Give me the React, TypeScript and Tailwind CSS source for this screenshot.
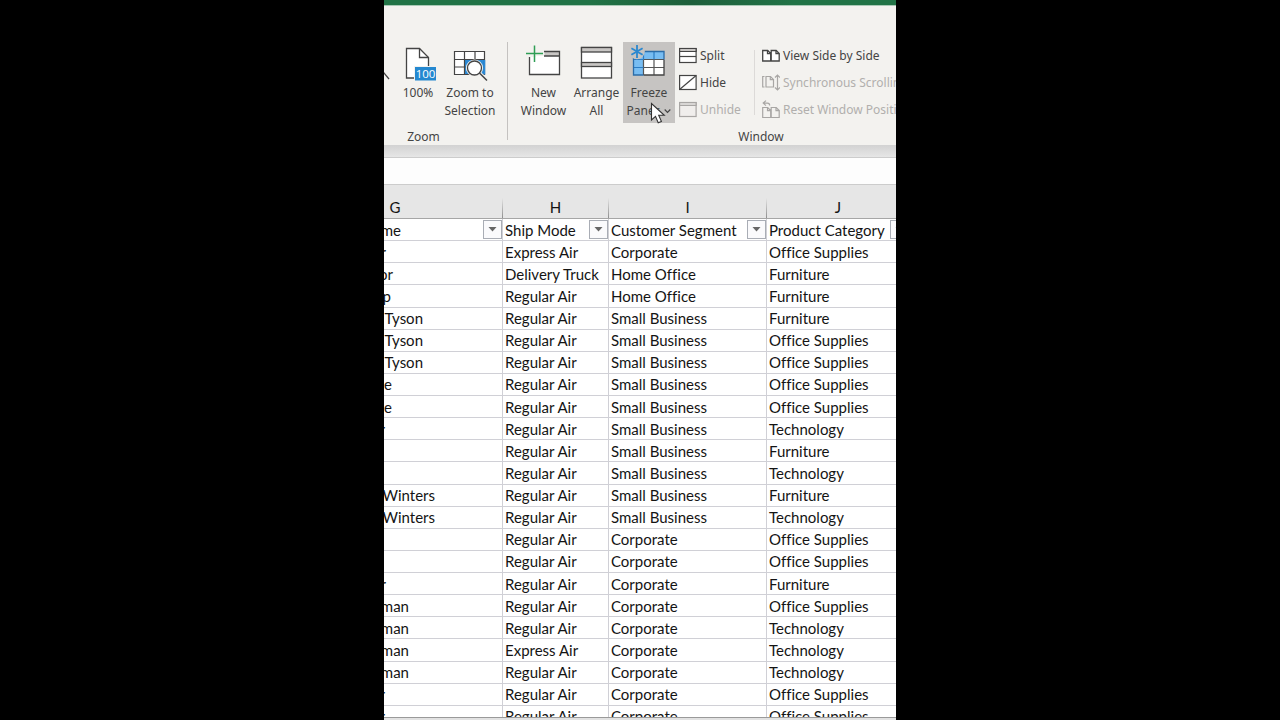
import type { ReactNode } from "react";

const ink = "#444444";

function ZoomIcon() {
  return (
    <svg className="h-[42px] w-[52px] shrink-0" viewBox="0 0 52 42" fill="none" stroke={ink} strokeWidth="1.3">
      <circle cx="32" cy="17" r="10" fill="#fff" />
      <path d="M39 25l10 12" />
    </svg>
  );
}

function HundredIcon() {
  return (
    <svg className="h-[42px] w-[52px] shrink-0" viewBox="0 0 52 42" fill="none" stroke={ink} strokeWidth="1.3">
      <path d="M14.5 6.5h13l9 9v20.5h-22z" fill="#fff" />
      <path d="M27.5 6.5v9h9" />
      <rect x="22" y="24" width="23" height="15.5" fill="#f3f2ef" stroke="none" />
      <rect x="23" y="25" width="21" height="13.5" fill="#2488d0" stroke="none" />
      <text x="33.5" y="36" textAnchor="middle" fontSize="11.5" fill="#fff" stroke="none" fontFamily="Open Sans, sans-serif">
        100
      </text>
    </svg>
  );
}

function SelectionIcon() {
  return (
    <svg className="h-[42px] w-[52px] shrink-0" viewBox="0 0 52 42" fill="none">
      <rect x="10.5" y="9.5" width="30" height="23" fill="#fff" />
      <rect x="20.5" y="17" width="20" height="15.5" fill="#2b8ad6" />
      <path d="M10.5 9.5h30v23h-30zM20.5 9.5v23M31 9.5v8M10.5 17.5h30M10.5 25h11" stroke={ink} strokeWidth="1.2" />
      <path d="M40.500 18v14.500" stroke="#2b8ad6" strokeWidth="1.500" />
      <circle cx="30.500" cy="26" r="8.600" fill="#f3f2ef" />
      <path d="M35 31l8 7.500" stroke="#f3f2ef" strokeWidth="4" />
      <circle cx="30.500" cy="26" r="7" fill="#fff" stroke={ink} strokeWidth="1.300" />
      <path d="M35.500 31l7.500 7.500" stroke={ink} strokeWidth="1.500" />
    </svg>
  );
}

function NewWindowIcon() {
  return (
    <svg className="h-[42px] w-[53px] shrink-0" viewBox="2 0 53 42" fill="none">
      <path d="M14 15h7v-1h23.500v18.500H14z" fill="#fff" />
      <path d="M29.500 9.500h15v4.500h-15z" fill="#c8c6c4" />
      <path d="M29 9.500h15.500v23H14.500V15M29 14h15.500" stroke={ink} strokeWidth="1.300" />
      <path d="M19.500 3.500v16.500M11 11.500h17" stroke="#2f9e55" strokeWidth="1.500" />
    </svg>
  );
}

function ArrangeIcon() {
  return (
    <svg className="h-[42px] w-[53px] shrink-0" viewBox="1 0 53 42" fill="none" stroke={ink} strokeWidth="1.300">
      <rect x="12.500" y="5.500" width="30" height="30.500" fill="#fff" />
      <rect x="12.500" y="5.500" width="30" height="4.500" fill="#c8c6c4" />
      <rect x="12.500" y="20.500" width="30" height="4" fill="#c8c6c4" />
    </svg>
  );
}

function FreezeIcon() {
  return (
    <svg className="h-[42px] w-[52px] shrink-0" viewBox="0 0 52 42" fill="none">
      <rect x="10.500" y="9.500" width="30.500" height="23.500" fill="#fff" />
      <path d="M10.500 9.500H41v8H20.500V33h-10z" fill="#78bdf2" />
      <path d="M20.500 17.500V33M31 17.500V33M20.500 17.500H41M20.500 25.500H41" stroke="#555" strokeWidth="1.200" />
      <path d="M20.500 9.500v8M31 9.500v8M10.500 17.500h10M10.500 25.500h10" stroke="#2b7cc4" strokeWidth="1.200" />
      <path d="M20.500 33H41V17.500" stroke={ink} strokeWidth="1.300" />
      <path d="M41 17.500v-8H10.500V33h10" stroke="#2b6ca8" strokeWidth="1.300" />
      <circle cx="14" cy="9.500" r="7.800" fill="#c6c4c2" />
      <path d="M14 3v13M8.400 6.300l11.200 6.400M8.400 12.700l11.200-6.400" stroke="#2b88cf" strokeWidth="1.800" />
    </svg>
  );
}

function PaneIcon({ kind }: { kind: "split" | "hide" | "unhide" }) {
  const off = kind === "unhide";
  return (
    <svg className="h-5 w-[18px] shrink-0" viewBox="0 0 18 20" fill="none" stroke={off ? "#a8a6a4" : ink} strokeWidth="1.200">
      <rect x="0.600" y="2.500" width="16.500" height="14" fill={off ? "#f0eeec" : "#fff"} />
      {kind !== "hide" && <path d="M0.600 2.500h16.500v3H0.600z" fill={off ? "#d8d6d4" : "#c8c6c4"} />}
      {kind === "split" && <path d="M0.600 10.500h16.500" />}
      {kind === "hide" && <path d="M0.600 16.500l16.500-14" />}
    </svg>
  );
}

function SideBySideIcon() {
  return (
    <svg className="h-5 w-[18px] shrink-0" viewBox="0 0 18 20" fill="none" stroke={ink} strokeWidth="1.300">
      <path d="M.7 4.500h5l3 3v7.500h-8zM9.200 4.500h5l3 3v7.500h-8z" fill="#fff" />
      <path d="M5.500 4.500v3.200h3.200M14 4.500v3.200h3.200" />
    </svg>
  );
}

function SyncIcon() {
  return (
    <svg className="h-5 w-[18px] shrink-0" viewBox="0 0 18 20" fill="none" stroke="#a8a6a4" strokeWidth="1.200">
      <path d="M2.500 3.500H.7v10.500h1.800M4 3.500h4.500l3 3V14H4z" />
      <path d="M8.300 3.500v3.200h3.200M15.500 2v15M13 4.500l2.500-2.500L18 4.500M13 14.500l2.500 2.500 2.500-2.500" />
    </svg>
  );
}

function ResetIcon() {
  return (
    <svg className="h-5 w-[18px] shrink-0" viewBox="0 0 18 20" fill="none" stroke="#a8a6a4" strokeWidth="1.200">
      <path d="M.7 7.500h5l3 3v7h-8zM9.200 7.500h5l3 3v7h-8z" />
      <path d="M5.500 7.500v3.200h3.200M14 7.500v3.200h3.200M4 .6L1.200 3.100 4 5.600M1.200 3.100h4.300q2.200 0 2.200 2.500" />
    </svg>
  );
}

function Pointer() {
  return (
    <svg className="pointer-events-none absolute left-[27px] top-[60px] h-[22px] w-[16px]" viewBox="0 0 16 22">
      <path d="M1.500 1.500v16.500l4-3.600 2.700 6.400 3.200-1.400-2.700-6.100h5.600z" fill="#fff" stroke="#333" strokeWidth="1.100" />
    </svg>
  );
}

function BigButton({ icon, children, className }: { icon: ReactNode; children: ReactNode; className: string }) {
  return (
    <button className={`flex h-[81px] shrink-0 flex-col items-center whitespace-nowrap text-center leading-[18px] ${className}`}>
      {icon}
      {children}
    </button>
  );
}

function SmallButton({ icon, label, disabled }: { icon: ReactNode; label: string; disabled?: boolean }) {
  return (
    <button disabled={disabled} className="flex h-[27px] items-center gap-[3px] whitespace-nowrap disabled:text-[#b1afad]">
      {icon}
      {label}
    </button>
  );
}

function Ribbon() {
  return (
    <div className="flex h-[139px] shrink-0 bg-[#f3f2ef] pt-9 font-['Noto_Sans',sans-serif] text-[12px] text-[#444444]">
      <section className="-ml-[47px] flex w-[170px] shrink-0 flex-col pl-[3px]">
        <div className="flex">
          <BigButton className="w-[52px]" icon={<ZoomIcon />}>
            <span>Zoom</span>
          </BigButton>
          <BigButton className="w-[52px]" icon={<HundredIcon />}>
            <span>100%</span>
          </BigButton>
          <BigButton className="w-[52px]" icon={<SelectionIcon />}>
            <span>
              Zoom to
              <br />
              Selection
            </span>
          </BigButton>
        </div>
        <h2 className="mt-[5px] text-center leading-[18px]">Zoom</h2>
      </section>
      <div className="h-[98px] w-px shrink-0 bg-[#c4c2c0]" />
      <section className="flex w-[506px] shrink-0 flex-col">
        <div className="flex pl-[9px]">
          <BigButton className="w-[53px]" icon={<NewWindowIcon />}>
            <span>
              New
              <br />
              Window
            </span>
          </BigButton>
          <BigButton className="w-[53px]" icon={<ArrangeIcon />}>
            <span>
              Arrange
              <br />
              All
            </span>
          </BigButton>
          <BigButton className="relative w-[52px] bg-[#c6c4c2]" icon={<FreezeIcon />}>
            <span>Freeze</span>
            <span className="flex items-center gap-1">
              Panes
              <svg className="h-2 w-[7px]" viewBox="0 0 7 8" fill="none" stroke={ink} strokeWidth="1.200">
                <path d="M.7 2.500l2.800 2.800 2.800-2.800" />
              </svg>
            </span>
            <Pointer />
          </BigButton>
          <div className="ml-1 flex w-[75px] flex-col">
            <SmallButton icon={<PaneIcon kind="split" />} label="Split" />
            <SmallButton icon={<PaneIcon kind="hide" />} label="Hide" />
            <SmallButton icon={<PaneIcon kind="unhide" />} label="Unhide" disabled />
          </div>
          <div className="mt-2 h-[65px] w-px bg-[#dcdad8]" />
          <div className="ml-[7px] flex flex-col">
            <SmallButton icon={<SideBySideIcon />} label="View Side by Side" />
            <SmallButton icon={<SyncIcon />} label="Synchronous Scrolling" disabled />
            <SmallButton icon={<ResetIcon />} label="Reset Window Position" disabled />
          </div>
        </div>
        <h2 className="mt-[5px] text-center leading-[18px]">Window</h2>
      </section>
    </div>
  );
}

type Row = { name: string; end: number; ship: string; segment: string; category: string };

const row = (name: string, end: number, ship: string, segment: string, category: string): Row => ({
  name,
  end,
  ship,
  segment,
  category,
});

const rows: Row[] = [
  row("r", 2, "Express Air", "Corporate", "Office Supplies"),
  row("or", 9, "Delivery Truck", "Home Office", "Furniture"),
  row("p", 7, "Regular Air", "Home Office", "Furniture"),
  row("Tyson", 39, "Regular Air", "Small Business", "Furniture"),
  row("Tyson", 39, "Regular Air", "Small Business", "Office Supplies"),
  row("Tyson", 39, "Regular Air", "Small Business", "Office Supplies"),
  row("e", 8, "Regular Air", "Small Business", "Office Supplies"),
  row("e", 8, "Regular Air", "Small Business", "Office Supplies"),
  row("r", 1, "Regular Air", "Small Business", "Technology"),
  row("", 0, "Regular Air", "Small Business", "Furniture"),
  row("", 0, "Regular Air", "Small Business", "Technology"),
  row("Winters", 51, "Regular Air", "Small Business", "Furniture"),
  row("Winters", 51, "Regular Air", "Small Business", "Technology"),
  row("", 0, "Regular Air", "Corporate", "Office Supplies"),
  row("", 0, "Regular Air", "Corporate", "Office Supplies"),
  row("r", 2, "Regular Air", "Corporate", "Furniture"),
  row("man", 25, "Regular Air", "Corporate", "Office Supplies"),
  row("man", 25, "Regular Air", "Corporate", "Technology"),
  row("man", 25, "Express Air", "Corporate", "Technology"),
  row("man", 25, "Regular Air", "Corporate", "Technology"),
  row("r", 1, "Regular Air", "Corporate", "Office Supplies"),
  row("r", 1, "Regular Air", "Corporate", "Office Supplies"),
];

function NameText({ text, end }: { text: string; end: number }) {
  return (
    <div className="ml-24 flex justify-end" style={{ width: end }}>
      {text}
    </div>
  );
}

function FilterButton({ label }: { label: string }) {
  return (
    <button aria-label={`Filter ${label}`} className="flex size-[19px] shrink-0 items-center justify-center border border-[#a9adb5] bg-[#fafafc]">
      <svg className="h-[5px] w-[9px]" viewBox="0 0 9 5" fill="#666">
        <path d="M.5 0h8L4.500 4.500z" />
      </svg>
    </button>
  );
}

const columns = [
  { letter: "G", title: "me" },
  { letter: "H", title: "Ship Mode" },
  { letter: "I", title: "Customer Segment" },
  { letter: "J", title: "Product Category" },
];

const cell = "overflow-hidden whitespace-nowrap border-b border-r border-[#d0d0d6] p-0 leading-5";

function Sheet() {
  return (
    <div className="min-h-0 flex-1 overflow-hidden bg-white">
      <table className="-ml-24 h-[543px] w-[622px] table-fixed border-separate border-spacing-0 font-[Lato,sans-serif] text-[15px] text-[#141414] [font-variant-ligatures:none]">
        <colgroup>
          <col className="w-[215px]" />
          <col className="w-[106px]" />
          <col className="w-[158px]" />
          <col className="w-[143px]" />
        </colgroup>
        <thead>
          <tr className="h-[34px] bg-[#e6e6e6]">
            {columns.map((c) => (
              <th key={c.letter} scope="col" className="border-b border-[#a6a6a6] p-0 font-normal">
                <div className="flex h-[33px] items-end">
                  <span className="flex-1 pb-[2px] text-center leading-[18px]">{c.letter}</span>
                  <span className="h-5 w-px bg-linear-to-b from-[#e6e6e6] to-[#8f8f8f]" />
                </div>
              </th>
            ))}
          </tr>
        </thead>
        <tbody>
          <tr>
            {columns.map((c, i) => (
              <th key={c.letter} scope="col" className={`${cell} text-left font-normal`}>
                <div className="flex h-5 items-center justify-between pl-[2px]">
                  {i === 0 ? <NameText text={c.title} end={15} /> : <span>{c.title}</span>}
                  <FilterButton label={c.title} />
                </div>
              </th>
            ))}
          </tr>
          {rows.map((r, i) => (
            <tr key={i}>
              <td className={cell}>
                <NameText text={r.name} end={r.end} />
              </td>
              <td className={`${cell} pl-[2px]`}>{r.ship}</td>
              <td className={`${cell} pl-[2px]`}>{r.segment}</td>
              <td className={`${cell} pl-[2px]`}>{r.category}</td>
            </tr>
          ))}
        </tbody>
      </table>
    </div>
  );
}

export default function App() {
  return (
    <div className="flex h-screen justify-center bg-black">
      <main className="flex w-2/5 flex-col overflow-hidden">
        <div className="h-[5px] shrink-0 bg-linear-to-r from-[#217346] from-40% via-[#1d5f3b] via-60% to-[#217346] to-80%" />
        <div className="h-px shrink-0 bg-[#a9c9b6]" />
        <Ribbon />
        <div className="h-3 shrink-0 bg-linear-to-b from-[#d2d2d2] to-[#e6e6e6]" />
        <div className="h-7 shrink-0 border-y border-[#cccccc] bg-[#fdfdfd]" />
        <Sheet />
        <div className="h-[3px] shrink-0 border-t border-[#9a9a9a] bg-[#e2e2e2]" />
      </main>
    </div>
  );
}
